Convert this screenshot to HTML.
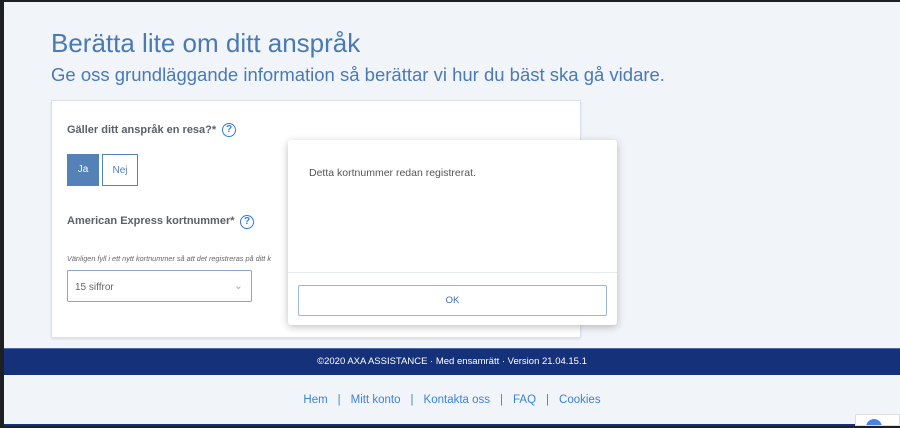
<!DOCTYPE html>
<html><head><meta charset="utf-8"><style>
*{margin:0;padding:0;box-sizing:border-box}
body{width:900px;height:428px;overflow:hidden;background:#1e1f22;font-family:"Liberation Sans",Arial,sans-serif;position:relative}
.page{position:absolute;left:4px;top:2px;width:896px;height:424px;background:#f1f4f8}
.abs{position:absolute}
h1{position:absolute;left:47px;top:26px;font-size:26px;font-weight:normal;color:#4a7ab5}
h2{position:absolute;left:47px;top:62px;font-size:18.5px;font-weight:normal;color:#4a7ab5}
.card{left:47px;top:98px;width:530px;height:238px;background:#fff;border:1px solid #dde2ea;box-shadow:0 1px 2px rgba(0,0,0,.1)}
.lbl{font-size:11px;font-weight:bold;color:#5a5f6a}
.q{width:14px;height:14px;border:1.5px solid #2f7be0;border-radius:50%;color:#2f7be0;font-size:10px;font-weight:bold;text-align:center;line-height:11px}
.btn{font-size:10px;text-align:center;line-height:31px;width:32px;height:32px}
.modal{left:284px;top:138px;width:329px;height:185px;background:#fff;border-radius:3px;box-shadow:0 2px 8px rgba(0,0,0,.25)}
.foot{left:0;top:346px;width:896px;height:27px;background:#14317a;border-top:1px solid #4d6aa8;color:#fff;font-size:9.5px;text-align:center;line-height:26px}
.links{left:0;top:392px;width:896px;text-align:center;font-size:11.5px;color:#3b82e0}
.links span{margin:0 10px;color:#3b82e0}
</style></head><body>
<div class="page">
<h1>Berätta lite om ditt anspråk</h1>
<h2>Ge oss grundläggande information så berättar vi hur du bäst ska gå vidare.</h2>
<div class="abs card"></div>
<div class="abs lbl" style="left:63px;top:122px">Gäller ditt anspråk en resa?*</div>
<div class="abs q" style="left:218px;top:121px;left:218px">?</div>
<div class="abs btn" style="left:63px;top:152px;background:#5482b8;color:#fff">Ja</div>
<div class="abs btn" style="left:98px;top:152px;border:1px solid #5482b8;color:#5482b8;background:#fff;width:36px">Nej</div>
<div class="abs lbl" style="left:63px;top:213px">American Express kortnummer*</div>
<div class="abs q" style="left:236px;top:213px">?</div>
<div class="abs" style="left:63px;top:252px;font-size:7.3px;font-style:italic;color:#666">Vänligen fyll i ett nytt kortnummer så att det registreras på ditt k</div>
<div class="abs" style="left:63px;top:268px;width:185px;height:32px;border:1px solid #8aa6cc;border-radius:2px;font-size:10px;color:#666;padding:11px 7px">15 siffror<span style="position:absolute;right:8px;top:8px;color:#aaa;font-size:11px">&#8964;</span></div>
<div class="abs modal">
 <div class="abs" style="left:21px;top:27px;font-size:10.5px;color:#555">Detta kortnummer redan registrerat.</div>
 <div class="abs" style="left:0;top:132px;width:329px;border-top:1px solid #e6e9ee"></div>
 <div class="abs" style="left:10px;top:145px;width:309px;height:31px;border:1px solid #9db4d6;border-radius:2px;text-align:center;line-height:29px;font-size:9.5px;color:#3f6fb0">OK</div>
</div>
<div class="abs foot">©2020 AXA ASSISTANCE · Med ensamrätt · Version 21.04.15.1</div>
<div class="abs links">Hem<span>|</span>Mitt konto<span>|</span>Kontakta oss<span>|</span>FAQ<span>|</span>Cookies</div>
<div class="abs" style="left:0;top:422px;width:896px;height:2px;background:#14317a"></div>
<div class="abs" style="left:851px;top:412px;width:45px;height:12px;background:#fff;border:1px solid #ddd;border-radius:2px 0 0 0;overflow:hidden"><div style="position:absolute;left:10px;top:4px;width:16px;height:16px;border-radius:50%;background:#4a83e8"></div></div>
</div>
</body></html>
